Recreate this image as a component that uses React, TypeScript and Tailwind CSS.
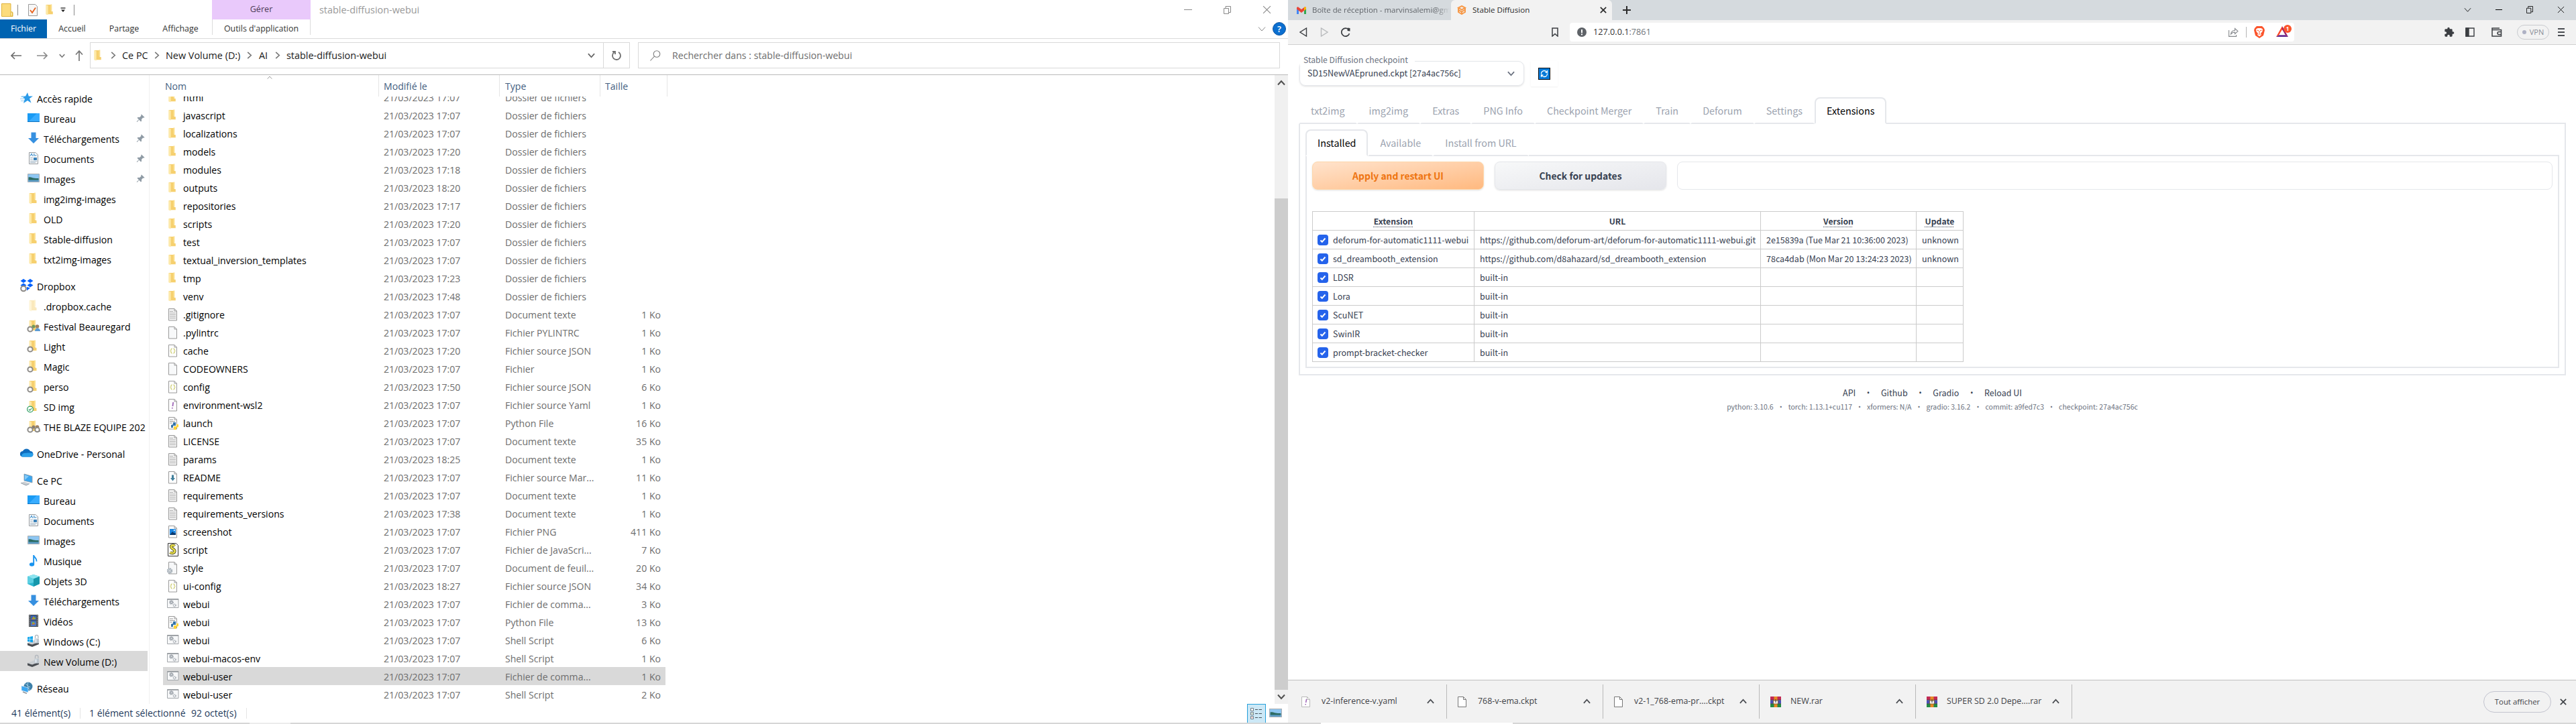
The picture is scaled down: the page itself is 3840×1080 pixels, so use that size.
import type { ReactNode } from 'react';
import clsx from 'clsx';
import { RefreshCw } from 'lucide-react';

type FileKind =
  | 'folder' | 'text' | 'blank' | 'json' | 'yaml' | 'python' | 'markdown' | 'image' | 'js' | 'css' | 'batch';

type FileRow = [name: string, kind: FileKind, time: string, type: string, size?: string];

const FILES: FileRow[] = [
  ['html', 'folder', '17:07', 'Dossier de fichiers'],
  ['javascript', 'folder', '17:07', 'Dossier de fichiers'],
  ['localizations', 'folder', '17:07', 'Dossier de fichiers'],
  ['models', 'folder', '17:20', 'Dossier de fichiers'],
  ['modules', 'folder', '17:18', 'Dossier de fichiers'],
  ['outputs', 'folder', '18:20', 'Dossier de fichiers'],
  ['repositories', 'folder', '17:17', 'Dossier de fichiers'],
  ['scripts', 'folder', '17:20', 'Dossier de fichiers'],
  ['test', 'folder', '17:07', 'Dossier de fichiers'],
  ['textual_inversion_templates', 'folder', '17:07', 'Dossier de fichiers'],
  ['tmp', 'folder', '17:23', 'Dossier de fichiers'],
  ['venv', 'folder', '17:48', 'Dossier de fichiers'],
  ['.gitignore', 'text', '17:07', 'Document texte', '1 Ko'],
  ['.pylintrc', 'blank', '17:07', 'Fichier PYLINTRC', '1 Ko'],
  ['cache', 'json', '17:20', 'Fichier source JSON', '1 Ko'],
  ['CODEOWNERS', 'blank', '17:07', 'Fichier', '1 Ko'],
  ['config', 'json', '17:50', 'Fichier source JSON', '6 Ko'],
  ['environment-wsl2', 'yaml', '17:07', 'Fichier source Yaml', '1 Ko'],
  ['launch', 'python', '17:07', 'Python File', '16 Ko'],
  ['LICENSE', 'text', '17:07', 'Document texte', '35 Ko'],
  ['params', 'text', '18:25', 'Document texte', '1 Ko'],
  ['README', 'markdown', '17:07', 'Fichier source Mar...', '11 Ko'],
  ['requirements', 'text', '17:07', 'Document texte', '1 Ko'],
  ['requirements_versions', 'text', '17:38', 'Document texte', '1 Ko'],
  ['screenshot', 'image', '17:07', 'Fichier PNG', '411 Ko'],
  ['script', 'js', '17:07', 'Fichier de JavaScri...', '7 Ko'],
  ['style', 'css', '17:07', 'Document de feuil...', '20 Ko'],
  ['ui-config', 'json', '18:27', 'Fichier source JSON', '34 Ko'],
  ['webui', 'batch', '17:07', 'Fichier de comma...', '3 Ko'],
  ['webui', 'python', '17:07', 'Python File', '13 Ko'],
  ['webui', 'batch', '17:07', 'Shell Script', '6 Ko'],
  ['webui-macos-env', 'batch', '17:07', 'Shell Script', '1 Ko'],
  ['webui-user', 'batch', '17:07', 'Fichier de comma...', '1 Ko'],
  ['webui-user', 'batch', '17:07', 'Shell Script', '2 Ko'],
];

const SELECTED_FILE = 32;

/* ---------- icons ---------- */

function Chevron({ dir, className }: { dir: 'up' | 'down' | 'right'; className?: string }) {
  const d = { up: 'M1 8.5 6 3l5 5.5', down: 'M1 3.5 6 9l5-5.5', right: 'M3.5 1 9 6l-5.5 5' }[dir];
  return (
    <svg viewBox="0 0 12 12" className={clsx('shrink-0', className)} fill="none" stroke="currentColor">
      <path d={d} />
    </svg>
  );
}

function Folder({ className, faded, badge }: { className?: string; faded?: boolean; badge?: 'cloud' | 'people' | 'check' | 'team' }) {
  return (
    <svg viewBox="0 0 20 20" className={clsx('shrink-0', className)}>
      <g opacity={faded ? 0.45 : 1}>
        <path d="M4 2h8v10l2.500 1v4H4z" fill="#f6d06f" />
        <path d="M11 1.500h2v10h-2z" fill="#fbe08f" />
        <path d="M3.500 2 7 3.500v15L3.500 17z" fill="#fde9a9" />
      </g>
      {(badge === 'people' || badge === 'team') && (
        <>
          <circle cx="10" cy="11" r="2.500" fill={badge === 'people' ? '#6f9a5a' : '#8a7d70'} />
          <circle cx="15.500" cy="11" r="2.800" fill="#a0805f" />
          <path d="M12 18c0-6 8-6 8 0z" fill={badge === 'people' ? '#5b9bd5' : '#8b8986'} />
        </>
      )}
      {badge && badge !== 'check' && (
        <circle cx="5" cy="15" r="3.600" fill="#fff" stroke="#8b8986" strokeWidth="2" />
      )}
      {badge === 'team' && <circle cx="15.500" cy="15" r="3.300" fill="#fff" stroke="#8b8986" strokeWidth="2" />}
      {badge === 'check' && (
        <>
          <circle cx="5" cy="14.500" r="4.400" fill="#fff" stroke="#2f9e63" strokeWidth="1.200" />
          <path d="m3 14.500 1.500 1.700 2.700-3" fill="none" stroke="#2f9e63" strokeWidth="1.200" />
        </>
      )}
    </svg>
  );
}

function Page({ children, tint = '#fdfdfd' }: { children?: ReactNode; tint?: string }) {
  return (
    <>
      <path d="M2.500 1.500h8.500l3.500 3.500v14h-12z" fill={tint} stroke="#9a9a9a" />
      <path d="M11 1.500V5h3.500" fill="none" stroke="#9a9a9a" />
      {children}
    </>
  );
}

function Python({ x = 6, y = 9 }) {
  return (
    <g transform={`translate(${x} ${y})`}>
      <path d="M3 0h4v5H3v3H0V4l3-1z" fill="#3775a9" />
      <path d="M8 3h3v4L8 8v3H4V6h4z" fill="#ffd43b" />
    </g>
  );
}

function Gears() {
  return (
    <g fill="none" stroke="#a3a9b0" strokeWidth="1.600">
      <circle cx="6.500" cy="7.500" r="2.600" strokeDasharray="1.400 0.800" />
      <circle cx="6.500" cy="7.500" r="1.600" />
      <circle cx="11.200" cy="12" r="1.800" strokeDasharray="1.200 0.600" />
    </g>
  );
}

function FileIcon({ kind }: { kind: FileKind }) {
  if (kind === 'folder') return <Folder className="size-[19px] -ml-0.5" />;
  return (
    <svg viewBox="0 0 18 20" className="h-5 w-[18px] shrink-0 -ml-px overflow-visible">
      {kind === 'text' && (
        <Page tint="#f1f1f1">
          <path d="M4 5.500h5M4 8h9M4 10.500h9M4 13h9M4 15.500h9" stroke="#b4b4b4" />
        </Page>
      )}
      {kind === 'blank' && <Page tint="#f8f9fa" />}
      {kind === 'json' && (
        <Page>
          <path d="M7.500 7q-1.500 0-1.500 1.500v1L5 10.500l1 1v1Q6 14 7.500 14M9.500 7Q11 7 11 8.500v1l1 1-1 1v1Q11 14 9.500 14" fill="none" stroke="#b9b92f" />
        </Page>
      )}
      {kind === 'yaml' && (
        <Page>
          <path d="m9.200 6-.8 6M7.900 14l-.2 1.500" stroke="#9a5fb5" strokeWidth="1.700" />
        </Page>
      )}
      {kind === 'python' && (
        <Page>
          <path d="M4 5h5M4 7.500h8M4 10h4" stroke="#9a9a9a" />
          <Python />
        </Page>
      )}
      {kind === 'markdown' && (
        <Page>
          <path d="M7 6.500h3V11h2l-3.500 4.500L5 11h2z" fill="#43809c" />
        </Page>
      )}
      {kind === 'image' && (
        <Page>
          <path d="M4 6h9v9H4z" fill="#1c86e0" />
          <path d="m4 15 4-5 3 2.500 2-1V15z" fill="#0b3a6f" />
          <circle cx="10.800" cy="8" r="1" fill="#fff" />
        </Page>
      )}
      {kind === 'js' && (
        <>
          <path d="M1.500.5h12l3 3v16h-15z" fill="#fff" stroke="#333" />
          <path d="M11.500 4.500c-2-2-6-1-5.500 1.500s5.500 3 5.500 6-4.500 4-7 2" fill="none" stroke="#4b4a20" strokeWidth="4.200" />
          <path d="M11.500 4.500c-2-2-6-1-5.500 1.500s5.500 3 5.500 6-4.500 4-7 2" fill="none" stroke="#e6dc4a" strokeWidth="2.500" />
        </>
      )}
      {kind === 'css' && (
        <>
          <Page tint="#f6f7f8" />
          <circle cx="4" cy="14.500" r="3.200" fill="#e4e8ec" stroke="#9ba5ae" strokeWidth="2" strokeDasharray="1.700 .8" />
          <circle cx="4" cy="14.500" r="1.400" fill="#fff" stroke="#9ba5ae" />
        </>
      )}
      {kind === 'batch' && (
        <>
          <path d="M.5 2.500h16.500v13H.5z" fill="#f7f8f9" stroke="#a2a6aa" />
          <path d="M.5 3h16.500" stroke="#8f9498" strokeWidth="1.500" />
          <Gears />
        </>
      )}
    </svg>
  );
}

function DesktopIcon() {
  return (
    <svg viewBox="0 0 20 20" className="size-5 shrink-0">
      <path d="M1 3h18v13H1z" fill="#1a9bf4" />
      <path d="M3 15 15 3h4v12z" fill="#38acff" />
      <path d="M1 15.500h18" stroke="#1273bd" />
    </svg>
  );
}

function DownloadIcon() {
  return (
    <svg viewBox="0 0 20 20" className="size-5 shrink-0">
      <path d="M6.500 1.500h7v8.500H18l-8 8-8-8h4.500z" fill="#3690e0" />
    </svg>
  );
}

function DocumentsIcon() {
  return (
    <svg viewBox="0 0 20 20" className="size-5 shrink-0">
      <path d="M3.500 1.500H13l3.500 3.500v13.500h-13z" fill="#fbfbfb" stroke="#969ba0" />
      <path d="m5 7 2-4 1.500 4M9.500 4H12M9.500 6h5" fill="none" stroke="#2f87c9" />
      <path d="M5 9.500h4M5 12h4M5 14.500h10M5 16.500h8" stroke="#9fb4c5" />
      <path d="M10 9h5v4h-5z" fill="#3a81b8" />
    </svg>
  );
}

function PicturesIcon({ className = 'size-5' }) {
  return (
    <svg viewBox="0 0 20 20" preserveAspectRatio="none" className={clsx('shrink-0', className)}>
      <path d="M1.500 3.500h17v12h-17z" fill="#8dc6f2" stroke="#a9adb1" />
      <path d="M2.500 8.500c4-1 6 2 15 1.500V13h-15z" fill="#2c6b62" />
      <path d="M2.500 12.500h15v2.500h-15z" fill="#5d9ec9" />
    </svg>
  );
}

function MusicIcon() {
  return (
    <svg viewBox="0 0 20 20" className="size-5 shrink-0">
      <ellipse cx="7.500" cy="16" rx="3.600" ry="2.800" fill="#1793ef" />
      <path d="M10.200 16V2c.5 4 4.800 4 4.300 9.500" fill="none" stroke="#1793ef" strokeWidth="1.900" />
    </svg>
  );
}

function CubeIcon() {
  return (
    <svg viewBox="0 0 20 20" className="size-5 shrink-0">
      <path d="m10 1 9 3v11l-9 4-9-4V4z" fill="#2bb5cf" />
      <path d="m10 1 9 3-9 3.500L1 4z" fill="#8de4ef" />
      <path d="m10 7.500 9-3.500v11l-9 4z" fill="#1597ab" />
      <path d="M1 4 10 7.500V13l-9 2z" fill="#5ccfe2" />
    </svg>
  );
}

function VideoIcon() {
  return (
    <svg viewBox="0 0 20 20" className="size-5 shrink-0">
      <path d="M3 1h14v18H3z" fill="#3c4046" />
      <path d="M6 2h8v7.500H6z" fill="#3465b5" />
      <path d="M6 10.500h8V18H6z" fill="#4a79c8" />
      <path d="m7 8 3-5 3 5zM7 16l3-4 3 3z" fill="#d9762b" />
      <path d="M9 5h4v2H9zM8 12h3v2H8z" fill="#7bb241" />
      <path d="M4.500 2v16M15.500 2v16" stroke="#dfe3e8" strokeWidth="1.200" strokeDasharray="1.500 1.500" />
    </svg>
  );
}

function DriveIcon({ windows }: { windows?: boolean }) {
  return (
    <svg viewBox="0 0 20 20" className="size-5 shrink-0">
      <path d="m1 13 6 2 11-4v4L8 19l-7-2.500z" fill="#4b4f54" />
      <path d="m1 13 10-4 8 2-11 4.500z" fill="#c9cdd1" />
      {windows && <path d="M1 4.500l3.500-.7v3.700H1zM5 3.700l4-.7v4.500H5zM1 8h3.500v3.600L1 11zM5 8h4v4.300l-4-.6z" fill="#12a5ec" />}
      <path d="M12.500 6V3.500a2.200 2.200 0 0 1 4.400 0V6" fill="none" stroke="#b0b6bc" strokeWidth="1.300" />
      <path d="M11.500 6.500h6.500v7h-6.500z" fill="#bcc6cf" />
      <path d="M12.500 7.500h2v5h-2z" fill="#e6edf3" />
    </svg>
  );
}

function StarIcon() {
  return (
    <svg viewBox="0 0 20 20" className="size-5 shrink-0">
      <path d="m11 2 1.800 5.500H19L14 11l2.500 6.500L11 14l-6 4 2-6.500-5-4h6z" fill="#2b9be9" />
      <path d="M1 8.500h5M0 11.500h6M1 14.500h5" stroke="#90cdf4" />
    </svg>
  );
}

function DropboxIcon() {
  return (
    <svg viewBox="0 0 20 20" className="size-5 shrink-0">
      <path d="m5 0 4.500 3L5 6 .5 3zM15 0l4.500 3L15 6l-4.500-3zM5 6.500l4.500 3-4.500 3-4.500-3zM15 6.500l4.500 3-4.500 3-4.500-3zM10 12l5 1.500-5 4z" fill="#0061fe" />
      <circle cx="5" cy="14.500" r="3.800" fill="#fff" stroke="#8b8986" strokeWidth="2" />
    </svg>
  );
}

function OneDriveIcon() {
  return (
    <svg viewBox="0 0 20 20" className="size-5 shrink-0">
      <path d="M4 15.500a4.200 4.200 0 0 1 0-8.500A6 6 0 0 1 15 7a4.300 4.300 0 0 1 1 8.500z" fill="#0f6cbd" />
      <path d="M3 15.500c-2-2 0-5 3-5.500s9-1 12 0c2.500 1.500 1.500 5.500-1.500 5.500z" fill="#2aa0ea" />
    </svg>
  );
}

function ComputerIcon({ network }: { network?: boolean }) {
  return (
    <svg viewBox="0 0 20 20" className="size-5 shrink-0">
      {network ? (
        <>
          <circle cx="12" cy="8" r="6.500" fill="#3d7fa8" />
          <path d="M8 4c3 1 3 5 7 5M12 2c-2 5 0 9 3 11" stroke="#a9d4e8" fill="none" />
          <path d="m2 7 10 3v7L2 14z" fill="#3aa6f0" stroke="#dceaf5" strokeWidth=".7" />
          <path d="m4 16 6 2.500" stroke="#8f969c" strokeWidth="1.500" />
        </>
      ) : (
        <>
          <path d="m6 1 12 3.500V14L6 11z" fill="#3aa6f0" stroke="#8c98a3" strokeWidth=".8" />
          <path d="m7 2.500 6 2L7 10z" fill="#86cbf8" />
          <path d="m1 14 5-1.500L14 15l-5 3z" fill="#c9ced3" />
          <path d="m1 14.500 8 3.500 5-2.500" stroke="#8c98a3" fill="none" />
        </>
      )}
    </svg>
  );
}

function PinIcon() {
  return (
    <svg viewBox="0 0 14 14" className="size-[13px] shrink-0" fill="#8f9ba5">
      <path d="M8.500.5 13.500 5.500 12.300 6.300 11 6 8.500 8.500l.2 2.800-1.200 1L4.700 9.500 1.500 13l-.8-.8L4.300 9 1.700 6.400l1-1.200L5.500 5.500 8 3l-.3-1.300z" />
    </svg>
  );
}

function WinrarIcon() {
  return (
    <svg viewBox="0 0 16 16" className="size-4 shrink-0">
      <path d="M0 0h16v5H0z" fill="#c22a55" />
      <path d="M0 5.500h16v5H0z" fill="#4a4fb8" />
      <path d="M0 11h16v5H0z" fill="#238a45" />
      <path d="M0 5.200h16M0 10.700h16" stroke="#222" strokeWidth=".7" />
      <path d="M5.500 0h5v16h-5z" fill="#e88b24" />
      <path d="M4.500 6h7v5h-7z" fill="#f3f0ea" stroke="#6b4a1f" strokeWidth=".7" />
      <path d="M8 4v5" stroke="#333" />
    </svg>
  );
}

function RestoreIcon({ className }: { className?: string }) {
  return (
    <svg viewBox="0 0 11 12" className={clsx('shrink-0', className)} fill="none" stroke="currentColor">
      <path d="M.5 3.500h7v8h-7zM3 3V.5h7.500v9H8" />
    </svg>
  );
}

function CloseIcon({ className, width = 1 }: { className?: string; width?: number }) {
  return (
    <svg viewBox="0 0 12 12" className={clsx('shrink-0', className)} fill="none" stroke="currentColor" strokeWidth={width}>
      <path d="m1 1 10 10M11 1 1 11" />
    </svg>
  );
}

/* ---------- explorer window ---------- */

function NavItem({ icon, label, root, pinned, selected }: { icon: ReactNode; label: string; root?: boolean; pinned?: boolean; selected?: boolean }) {
  return (
    <div
      className={clsx(
        'flex h-[30px] w-[220px] items-center gap-[5px] overflow-hidden whitespace-nowrap',
        root ? 'pl-[30px]' : 'pl-10',
        selected && 'bg-[#d9d9d9]',
      )}
    >
      {icon}
      <span className="min-w-0 flex-1 overflow-hidden pt-[3px]">{label}</span>
      {pinned && <span className="pr-1"><PinIcon /></span>}
    </div>
  );
}

function Sidebar() {
  return (
    <nav className="flex w-[223px] shrink-0 flex-col gap-2.5 border-r border-[#f0f0f0] pt-[19px] text-[14.1px] leading-5 text-black">
      <div>
        <NavItem root icon={<StarIcon />} label="Accès rapide" />
        <NavItem pinned icon={<DesktopIcon />} label="Bureau" />
        <NavItem pinned icon={<DownloadIcon />} label="Téléchargements" />
        <NavItem pinned icon={<DocumentsIcon />} label="Documents" />
        <NavItem pinned icon={<PicturesIcon />} label="Images" />
        {['img2img-images', 'OLD', 'Stable-diffusion', 'txt2img-images'].map((f) => (
          <NavItem key={f} icon={<Folder className="size-5" />} label={f} />
        ))}
      </div>
      <div>
        <NavItem root icon={<DropboxIcon />} label="Dropbox" />
        <NavItem icon={<Folder faded className="size-5" />} label=".dropbox.cache" />
        <NavItem icon={<Folder badge="people" className="size-5" />} label="Festival Beauregard" />
        <NavItem icon={<Folder badge="cloud" className="size-5" />} label="Light" />
        <NavItem icon={<Folder badge="cloud" className="size-5" />} label="Magic" />
        <NavItem icon={<Folder badge="cloud" className="size-5" />} label="perso" />
        <NavItem icon={<Folder badge="check" className="size-5" />} label="SD img" />
        <NavItem icon={<Folder badge="team" className="size-5" />} label="THE BLAZE EQUIPE 202" />
      </div>
      <NavItem root icon={<OneDriveIcon />} label="OneDrive - Personal" />
      <div>
        <NavItem root icon={<ComputerIcon />} label="Ce PC" />
        <NavItem icon={<DesktopIcon />} label="Bureau" />
        <NavItem icon={<DocumentsIcon />} label="Documents" />
        <NavItem icon={<PicturesIcon />} label="Images" />
        <NavItem icon={<MusicIcon />} label="Musique" />
        <NavItem icon={<CubeIcon />} label="Objets 3D" />
        <NavItem icon={<DownloadIcon />} label="Téléchargements" />
        <NavItem icon={<VideoIcon />} label="Vidéos" />
        <NavItem icon={<DriveIcon windows />} label="Windows (C:)" />
        <NavItem selected icon={<DriveIcon />} label="New Volume (D:)" />
      </div>
      <NavItem root icon={<ComputerIcon network />} label="Réseau" />
    </nav>
  );
}

function FileList() {
  return (
    <div className="flex min-w-0 flex-1 flex-col text-[14.1px] leading-5">
      <div className="flex h-8 shrink-0 pl-5 text-[#44607f]">
        <div className="relative w-[322px] border-r border-[#e5e5e5] pt-[7px] pl-[3px]">
          Nom
          <Chevron dir="up" className="absolute top-0 left-[154px] h-2 w-2.5 text-[#6d6d6d]" />
        </div>
        <div className="w-[180px] border-r border-[#e5e5e5] pt-[7px] pl-[7px]">Modifié le</div>
        <div className="w-[150px] border-r border-[#e5e5e5] pt-[7px] pl-2">Type</div>
        <div className="w-[100px] border-r border-[#e5e5e5] pt-[7px] pl-[7px]">Taille</div>
      </div>
      <div className="h-[906px] overflow-hidden pl-5">
        <div className="-mt-[13px]">
          {FILES.map(([name, kind, time, type, size], i) => (
            <div
              key={i}
              className={clsx('flex h-[27px] w-[749px] items-center whitespace-nowrap', i === SELECTED_FILE && 'bg-[#d9d9d9]')}
            >
              <div className="flex w-[30px] shrink-0 items-center pl-[7px]"><FileIcon kind={kind} /></div>
              <div className="w-[299px] shrink-0 pt-[3px] text-black">{name}</div>
              <div className="w-[181px] shrink-0 pt-[3px] text-[#6d6d6d]">21/03/2023 {time}</div>
              <div className="w-[150px] shrink-0 pt-[3px] text-[#6d6d6d]">{type}</div>
              <div className="w-[82px] shrink-0 pt-[3px] text-right text-[#6d6d6d]">{size}</div>
            </div>
          ))}
        </div>
      </div>
    </div>
  );
}

function Explorer() {
  return (
    <section className="flex h-[1078px] w-[1920px] shrink-0 flex-col bg-white font-['Open_Sans',sans-serif] whitespace-nowrap">
      {/* title bar */}
      <div className="flex h-[29px] shrink-0">
        <div className="flex w-[316px] items-center pl-0.5">
          <svg viewBox="0 0 18 20" className="h-5 w-[18px]">
            <path d="M.5.5H14v12l3 1v6H.5z" fill="#fcdc7c" stroke="#e0b43c" />
            <path d="M14 13h2.500v6H14z" fill="#fff0b5" stroke="#e0b43c" />
          </svg>
          <span className="ml-1.5 h-4 w-px bg-[#8a8a8a]" />
          <svg viewBox="0 0 14 18" className="ml-[15px] h-[18px] w-3.5">
            <path d="M.5.5h10l3 3v14H.5z" fill="#f7f7f7" stroke="#9b9b9b" />
            <path d="m3 9 3 4 5-7.500" fill="none" stroke="#e8611c" strokeWidth="1.800" />
          </svg>
          <Folder className="ml-[9px] size-[19px]" />
          <svg viewBox="0 0 8 8" className="ml-1.5 size-2">
            <path d="M.5 1h7" stroke="#222" strokeWidth="1.300" />
            <path d="M1 3.500h6L4 7z" fill="#222" />
          </svg>
          <span className="ml-3 h-4 w-px bg-[#8a8a8a]" />
        </div>
        <div className="flex w-[147px] items-center justify-center bg-[#e9c9fb] text-[12.6px] text-[#4b3a55]">Gérer</div>
        <div className="flex flex-1 items-center pl-[13px] text-[14.4px] text-[#999]">stable-diffusion-webui</div>
        <div className="flex items-center gap-[47px] pr-[25px] text-[#888]">
          <span className="h-px w-3 bg-[#888]" />
          <RestoreIcon className="h-3 w-[11px]" />
          <CloseIcon className="size-[13px]" />
        </div>
      </div>

      {/* ribbon tabs */}
      <div className="flex h-[29px] shrink-0 border-b border-[#dadada] text-[12.4px] leading-[28px] text-[#333]">
        <div className="w-[70px] bg-[#0063b1] text-center text-white">Fichier</div>
        <div className="w-[75px] text-center">Accueil</div>
        <div className="w-20 text-center">Partage</div>
        <div className="w-[91px] pr-[3px] text-center">Affichage</div>
        <div className="h-[23px] w-[147px] border-x border-[#dcdcdc] text-center">Outils d'application</div>
        <div className="flex flex-1 items-center justify-end gap-[10px] pr-[3px]">
          <Chevron dir="down" className="size-3 text-[#888]" />
          <div className="flex size-5 items-center justify-center rounded-full border border-[#1055a0] bg-[#0b6fd0] text-[13px] font-semibold text-white">?</div>
        </div>
      </div>

      {/* address bar */}
      <div className="flex h-[54px] shrink-0 items-start border-b border-[#b9b9b9] pt-[5px] text-[14.4px] text-[#1a1a1a]">
        <div className="flex h-[39px] w-[134px] items-center pl-4 text-[#777]">
          <svg viewBox="0 0 16 12" className="h-3 w-4" fill="none" stroke="#6d6d6d" strokeWidth="1.700"><path d="M6 1 1 6l5 5M1 6h15" /></svg>
          <svg viewBox="0 0 16 12" className="ml-[23px] h-3 w-4" fill="none" stroke="#8a8a8a" strokeWidth="1.700"><path d="m10 1 5 5-5 5M15 6H0" /></svg>
          <Chevron dir="down" className="ml-[17px] h-2.5 w-[9px] [stroke-width:2]" />
          <svg viewBox="0 0 12 16" className="ml-[15px] h-4 w-3" fill="none" stroke="#777" strokeWidth="1.700"><path d="M1 6.500 6 1l5 5.500M6 1v15" /></svg>
        </div>
        <div className="flex h-[39px] w-[805px] items-center border border-[#d9d9d9]">
          <Folder className="ml-0.5 size-[19px]" />
          <Chevron dir="right" className="ml-[7px] size-[11px] text-[#777] [stroke-width:1.800]" />
          <span className="ml-[8px] w-[46px]">Ce PC</span>
          <Chevron dir="right" className="size-[11px] text-[#777] [stroke-width:1.800]" />
          <span className="ml-[8px] w-[119px]">New Volume (D:)</span>
          <Chevron dir="right" className="size-[11px] text-[#777] [stroke-width:1.800]" />
          <span className="ml-[9px] w-[22px]">AI</span>
          <Chevron dir="right" className="size-[11px] text-[#777] [stroke-width:1.800]" />
          <span className="ml-[8px] flex-1">stable-diffusion-webui</span>
          <Chevron dir="down" className="mr-[12px] size-[11px] text-[#666] [stroke-width:2]" />
          <div className="flex h-full w-[39px] items-center justify-center border-l border-[#d9d9d9]">
            <svg viewBox="0 0 16 16" className="size-4" fill="none" stroke="#6d6d6d" strokeWidth="1.800">
              <path d="M11 2.800a6 6 0 1 1-6.500.3M2 2h4v4" />
            </svg>
          </div>
        </div>
        <div className="ml-3 flex h-[39px] w-[957px] items-center border border-[#d9d9d9] text-[14.15px] text-[#6d6d6d]">
          <svg viewBox="0 0 16 16" className="ml-[17px] size-4" fill="none" stroke="#7d7d7d" strokeWidth="1.100">
            <circle cx="10" cy="5.500" r="4.800" /><path d="M6.500 9 .5 15.500" />
          </svg>
          <span className="ml-[17px]">Rechercher dans : stable-diffusion-webui</span>
        </div>
      </div>

      <div className="flex h-[938px] shrink-0">
        <Sidebar />
        <FileList />
        <div className="flex w-5 shrink-0 flex-col items-center bg-[#f0f0f0]">
          <Chevron dir="up" className="mt-1.5 size-3 text-[#505050] [stroke-width:2]" />
          <div className="mt-[166px] h-[733px] w-full bg-[#cdcdcd]" />
          <Chevron dir="down" className="mt-[4px] size-3 text-[#505050] [stroke-width:2]" />
        </div>
      </div>

      {/* status bar */}
      <div className="flex h-7 items-center text-[14px] text-[#1e395b]">
        <span className="w-[102px] pb-px pl-[17px]">41 élément(s)</span>
        <span className="ml-[17px] h-4 w-px bg-[#e5e5e5]" />
        <span className="ml-[13px] w-[152px] pb-px">1 élément sélectionné</span>
        <span className="w-[82px] pb-px">92 octet(s)</span>
        <span className="h-4 w-px bg-[#e5e5e5]" />
        <div className="ml-auto flex items-center gap-[4px] pr-[8px]">
          <div className="flex h-7 w-7 items-center justify-center border border-b-0 border-[#26a0da] bg-[#cce8f6]">
            <svg viewBox="0 0 18 17" className="h-[17px] w-[18px]">
              <path d="M.5.5h4v4h-4zM.5 6.500h4v4h-4zM.5 12.500h4v4h-4z" fill="#fff" stroke="#6c7a84" />
              <path d="M7 2.500h4M12.500 2.500h4.500M7 8.500h4M12.500 8.500h4.500M7 14.500h4M12.500 14.500h4.500" stroke="#47545d" />
              <path d="M2 8h1v1H2z" fill="#2d8a2d" /><path d="M2 14h1v1H2z" fill="#c33" />
            </svg>
          </div>
          <PicturesIcon className="h-[20px] w-[21px]" />
        </div>
      </div>
    </section>
  );
}

/* ---------- browser window ---------- */

type ExtensionRow = { name: string; url: string; version?: string; update?: string };

const EXTENSIONS: ExtensionRow[] = [
  {
    name: 'deforum-for-automatic1111-webui',
    url: 'https://github.com/deforum-art/deforum-for-automatic1111-webui.git',
    version: '2e15839a (Tue Mar 21 10:36:00 2023)',
    update: 'unknown',
  },
  {
    name: 'sd_dreambooth_extension',
    url: 'https://github.com/d8ahazard/sd_dreambooth_extension',
    version: '78ca4dab (Mon Mar 20 13:24:23 2023)',
    update: 'unknown',
  },
  { name: 'LDSR', url: 'built-in' },
  { name: 'Lora', url: 'built-in' },
  { name: 'ScuNET', url: 'built-in' },
  { name: 'SwinIR', url: 'built-in' },
  { name: 'prompt-bracket-checker', url: 'built-in' },
];

const TABS = ['txt2img', 'img2img', 'Extras', 'PNG Info', 'Checkpoint Merger', 'Train', 'Deforum', 'Settings', 'Extensions'];
const SUB_TABS = ['Installed', 'Available', 'Install from URL'];

const VERSIONS = ['python: 3.10.6', 'torch: 1.13.1+cu117', 'xformers: N/A', 'gradio: 3.16.2', 'commit: a9fed7c3', 'checkpoint: 27a4ac756c'];

function TabStrip({ tabs, active }: { tabs: string[]; active: string }) {
  return (
    <div className="flex h-10 text-[14.35px] leading-[36px] text-[#9ca3af]">
      {tabs.map((tab) => (
        <div
          key={tab}
          className={clsx(
            'border-2 px-4',
            tab === active
              ? 'rounded-t-lg border-[#e5e7eb] border-b-white bg-white text-black'
              : 'border-transparent border-b-[#e5e7eb]',
          )}
        >
          {tab}
        </div>
      ))}
      <div className="flex-1 border-b-2 border-[#e5e7eb]" />
    </div>
  );
}

function BrowserChrome() {
  return (
    <>
      <div className="flex h-[30px] shrink-0 bg-[#d5dade] text-[11.6px] text-[#5f6368]">
        <div className="flex w-[243px] items-center pl-[13px]">
          <svg viewBox="0 0 14 11" className="h-[11px] w-3.5 shrink-0">
            <path d="M0 1.500V11h3V4.500z" fill="#4285f4" />
            <path d="M14 1.500V11h-3V4.500z" fill="#34a853" />
            <path d="M0 1.500v2L7 9l7-5.500v-2C13 0 12 0 11 1L7 4 3 1C2 0 1 0 0 1.500z" fill="#ea4335" />
            <path d="M11 1v5l3-2.500v-2C13.500 0 12 0 11 1z" fill="#fbbc04" />
          </svg>
          <span className="ml-[9px] w-[205px] overflow-hidden text-[11.45px] whitespace-nowrap [mask-image:linear-gradient(to_right,black_90%,transparent)]">
            Boîte de réception - marvinsalemi@gm
          </span>
        </div>
        <div className="flex w-60 items-center rounded-t-md bg-[#f2f2f2] pl-[9px] text-[#2b2b2b]">
          <svg viewBox="0 0 14 14" className="size-3.5" fill="none" stroke="#f79a4a" strokeWidth="2">
            <path d="m7 1 5 2.500L7 6.500 2 3.500zM2 4v6l5 3V9.500L2 7M12 4v6l-5 3M7 9.500l5-3" />
          </svg>
          <span className="ml-[9px] flex-1">Stable Diffusion</span>
          <CloseIcon width={2} className="mr-2 size-2.5" />
        </div>
        <div className="flex flex-1 items-center pl-4">
          <svg viewBox="0 0 12 12" className="size-3" stroke="#2b2b2b" strokeWidth="2"><path d="M6 0v12M0 6h12" /></svg>
        </div>
        <div className="flex items-center gap-[36px] pr-[17px] pb-0.5 text-[#111]">
          <Chevron dir="down" className="size-[11px]" />
          <span className="h-px w-2.5 bg-black" />
          <RestoreIcon className="h-[11px] w-2.5" />
          <CloseIcon className="size-[11px]" />
        </div>
      </div>

      <div className="flex h-[37px] shrink-0 items-center border-b border-[#d0d0d0] bg-[#f2f2f2] text-[#3b3e42]">
        <svg viewBox="0 0 12 14" className="ml-[17px] h-3.5 w-3" fill="none" stroke="currentColor" strokeWidth="1.400"><path d="M10.500 1v12L1 7z" /></svg>
        <svg viewBox="0 0 12 14" className="ml-[19px] h-3.5 w-3" fill="none" stroke="#b9bbbd" strokeWidth="1.400"><path d="M1.500 1v12L11 7z" /></svg>
        <svg viewBox="0 0 14 14" className="ml-[19px] size-3.5" fill="none" stroke="currentColor" strokeWidth="1.700">
          <path d="M12.500 9A6 6 0 1 1 11 2.800" /><path d="M10 .5 13.500 1v4.500L9.500 5z" fill="currentColor" stroke="none" />
        </svg>
        <svg viewBox="0 0 10 14" className="ml-[300px] h-3.5 w-2.5" fill="none" stroke="currentColor" strokeWidth="1.500"><path d="M1 1h8v12L5 9.500 1 13z" /></svg>
        <div className="ml-[17px] flex h-7 w-[1080px] items-center rounded bg-white text-[12.7px] text-[#333]">
          <svg viewBox="0 0 14 14" className="ml-[11px] size-3.5">
            <circle cx="7" cy="7" r="7" fill="#5f6368" /><path d="M6 3h2v5H6zM6 9.300h2v2H6z" fill="#fff" />
          </svg>
          <span className="ml-2.5 flex-1">127.0.0.1<span className="text-[#70757a]">:7861</span></span>
          <svg viewBox="0 0 15 14" className="h-3.5 w-[15px]" fill="none" stroke="#85888c" strokeWidth="1.100">
            <path d="M.6 4v9.400h11V11M3.500 10c.5-4 3-5.500 6-5.500V1.500L14 5.500l-4.500 4V7C7 7 5 8 3.500 10z" />
          </svg>
          <span className="ml-[11px] h-4 w-px bg-[#b5b5b5]" />
          <svg viewBox="0 0 16 18" className="ml-[11px] h-[18px] w-4">
            <path d="m4 0-3 3-1 3 2 8 6 4 6-4 2-8-1-3-3-3z" fill="#fb542b" />
            <path d="M3 4.500 5.500 3h5L13 4.500 12.500 8 10 11l1 2-3 2.300L5 13l1-2-2.500-3z" fill="#fff" />
            <path d="m4.500 6 2.500.8M11.500 6 9 6.800M8 7v3.500M6.500 12.500 8 11.500l1.500 1" stroke="#fb542b" fill="none" />
          </svg>
          <div className="relative mr-[9px] ml-[17px] h-[18px] w-[18px]">
            <svg viewBox="0 0 18 16" className="absolute bottom-0.5 h-4 w-[18px]">
              <path d="M9 0 0 16l4-2.500L9 5z" fill="#ff4724" />
              <path d="m9 0 9 16-4-2.500L9 5z" fill="#9e1f63" />
              <path d="M0 16h18l-4-2.800H4z" fill="#662d91" />
            </svg>
            <span className="absolute -top-0.5 -right-[5px] flex h-3 w-3 items-center justify-center rounded-full bg-[#fb542b] text-[8px] leading-none font-bold text-white">1</span>
          </div>
        </div>
        <svg viewBox="0 0 24 24" className="ml-[223px] size-4" fill="currentColor">
          <path d="M20.500 11H19V7a2 2 0 0 0-2-2h-4V3.500a2.500 2.500 0 0 0-5 0V5H4a2 2 0 0 0-2 2v3.800h1.500a2.700 2.700 0 0 1 0 5.400H2V20a2 2 0 0 0 2 2h3.800v-1.500a2.700 2.700 0 0 1 5.400 0V22H17a2 2 0 0 0 2-2v-4h1.500a2.500 2.500 0 0 0 0-5z" />
        </svg>
        <svg viewBox="0 0 14 14" className="ml-4 size-3.5" fill="none" stroke="currentColor" strokeWidth="1.400"><path d="M1 1h12v12H1z" /><path d="M1 1h4v12H1z" fill="currentColor" /></svg>
        <svg viewBox="0 0 16 14" className="ml-[25px] h-3.5 w-4" fill="none" stroke="currentColor" strokeWidth="1.500">
          <path d="M12 1H1v12h13.500V3.500H1M14.500 6.500H11a2 2 0 0 0 0 4h3.500" />
        </svg>
        <div className="ml-[22px] flex h-[22px] w-12 items-center justify-center gap-[5px] rounded-full border border-[#c9cbcf] text-[11px] text-[#8a8f98]">
          <span className="size-1.5 rounded-full bg-[#aeb1c4]" />VPN
        </div>
        <svg viewBox="0 0 10 12" className="ml-[13px] h-3 w-2.5" stroke="#4a4d52" strokeWidth="2"><path d="M0 1h10M0 6h10M0 11h10" /></svg>
      </div>
    </>
  );
}

function CheckedBox() {
  return (
    <span className="flex size-4 shrink-0 items-center justify-center rounded bg-[#2563eb]">
      <svg viewBox="0 0 16 16" className="size-4" fill="none" stroke="#fff" strokeWidth="2"><path d="m4.500 8.500 2.300 2.300L11.500 5.500" /></svg>
    </span>
  );
}

function ExtensionTable() {
  const cell = 'border border-[#cbcbcb] pl-2 pr-0';
  const hint = 'underline decoration-dotted underline-offset-[3px]';
  return (
    <table className="mt-8 w-[971px] table-fixed border-collapse text-[12.5px] leading-[20px] whitespace-nowrap text-[#374151]">
      <colgroup>
        <col className="w-[241px]" /><col className="w-[427px]" /><col className="w-[232px]" /><col className="w-[70px]" />
      </colgroup>
      <thead>
        <tr className="h-7 text-[12.2px] [&_th]:p-0 [&_th]:font-semibold">
          <th className={cell}><span className={hint}>Extension</span></th>
          <th className={cell}>URL</th>
          <th className={cell}><span className={hint}>Version</span></th>
          <th className={cell}><span className={hint}>Update</span></th>
        </tr>
      </thead>
      <tbody>
        {EXTENSIONS.map((ext) => (
          <tr key={ext.name} className="h-7">
            <td className={cell}>
              <div className="flex items-center gap-[7px] -ml-px"><CheckedBox />{ext.name}</div>
            </td>
            <td className={cell}>{ext.url}</td>
            <td className={cell}>{ext.version}</td>
            <td className={cell}>{ext.update}</td>
          </tr>
        ))}
      </tbody>
    </table>
  );
}

function WebuiPage() {
  return (
    <div className="flex-1 pl-4 font-['Noto_Sans_CJK_SC','Open_Sans',sans-serif]">
      {/* checkpoint picker */}
      <div className="flex items-start gap-2.5 pt-6">
        <fieldset className="relative ml-px h-[37px] w-[335px] rounded-[9px] border border-[#e5e7eb] shadow-sm">
          <span className="absolute -top-[13px] left-0 bg-white pr-2.5 pl-[5px] text-[12.2px] leading-5 text-[#6b7280]">Stable Diffusion checkpoint</span>
          <div className="flex h-full items-center justify-between pr-[13px] pl-[11px] text-[12.5px] text-[#374151]">
            SD15NewVAEpruned.ckpt [27a4ac756c]
            <Chevron dir="down" className="size-[11px] text-[#6b7280] [stroke-width:2]" />
          </div>
        </fieldset>
        <div className="flex h-[38px] w-10 items-center justify-center shadow-[0_1px_2px_rgba(0,0,0,0.06)]">
          <div className="flex size-[18px] items-center justify-center border border-[#111] bg-[#0078d7] text-white">
            <RefreshCw className="size-3" strokeWidth={2.600} />
          </div>
        </div>
      </div>

      <div className="mt-4 w-[1889px]">
        <TabStrip tabs={TABS} active="Extensions" />
        <div className="border-2 border-t-0 border-[#e5e7eb] px-2 pt-2 pb-[9px]">
          <TabStrip tabs={SUB_TABS} active="Installed" />
          <div className="border-2 border-t-0 border-[#e5e7eb] p-2 pb-[7px]">
            <div className="flex gap-4 text-[13.9px] font-semibold">
              <button className="h-[42px] w-64 rounded-lg border border-[#fed7aa] bg-gradient-to-br from-[#ffe3cc] to-[#ffb97f] text-[#ee7411] shadow-sm">
                Apply and restart UI
              </button>
              <button className="h-[42px] w-64 rounded-lg border border-[#e5e7eb] bg-gradient-to-br from-[#f7f8f9] to-[#e5e6eb] text-[#374151] shadow-sm">
                Check for updates
              </button>
              <div className="h-[42px] flex-1 rounded-lg border border-[#e5e7eb]" />
            </div>
            <ExtensionTable />
          </div>
        </div>
      </div>

      <footer className="flex w-[1889px] flex-col items-center pt-4 text-[#374151]">
        <div className="flex items-center text-[12.5px] leading-5">
          API<span className="mx-[12.6px]">•</span>Github<span className="mx-[12.6px]">•</span>Gradio<span className="mx-[12.6px]">•</span>Reload UI
        </div>
        <div className="mt-px flex items-center text-[10.5px] leading-5 text-[#6b7280]">
          {VERSIONS.map((item, i) => (
            <span key={item}>{i > 0 && <span className="mx-[5.8px]">•</span>}{item}</span>
          ))}
        </div>
      </footer>
    </div>
  );
}

const DOWNLOADS = [
  { name: 'v2-inference-v.yaml', icon: 'yaml' },
  { name: '768-v-ema.ckpt', icon: 'page' },
  { name: 'v2-1_768-ema-pr....ckpt', icon: 'page' },
  { name: 'NEW.rar', icon: 'rar' },
  { name: 'SUPER SD 2.0 Depe....rar', icon: 'rar' },
];

function DownloadShelf() {
  return (
    <div className="flex h-16 shrink-0 items-center border-t border-[#bfbfbf] bg-[#f2f2f2] pl-[4px] text-[12.4px] whitespace-nowrap text-[#3f4247]">
      {DOWNLOADS.map(({ name, icon }) => (
        <div key={name} className="flex h-[51px] w-[233px] items-center border-r border-[#b9b9b9]">
          <span className="flex w-[46px] items-center pl-[16px]">
            {icon === 'rar' ? (
              <WinrarIcon />
            ) : (
              <svg viewBox="0 0 13 16" className="h-4 w-[13px]">
                <path d="M.5.5h8l4 4v11H.5z" fill="#fff" stroke={icon === 'yaml' ? '#b9b9b9' : '#777'} />
                <path d="M8.500.5v4h4" fill="none" stroke={icon === 'yaml' ? '#b9b9b9' : '#777'} />
                {icon === 'yaml' && <path d="m7.500 4-.8 5M6.300 11l-.2 1.500" stroke="#9a5fb5" strokeWidth="1.500" />}
              </svg>
            )}
          </span>
          <span className="flex-1">{name}</span>
          <Chevron dir="up" className="mr-[18px] size-[11px] text-[#4a4d52] [stroke-width:2]" />
        </div>
      ))}
      <div className="ml-auto flex items-center pr-3.5">
        <div className="flex h-8 w-[101px] items-center justify-center rounded-full border border-[#c3c4cf] text-[11.4px]">Tout afficher</div>
        <CloseIcon width={2} className="ml-[13px] size-2.5" />
      </div>
    </div>
  );
}

export default function App() {
  return (
    <main className="flex h-[1080px] w-[3840px] flex-col overflow-hidden bg-white">
      <div className="flex">
        <Explorer />
        <section className="flex h-[1078px] w-[1920px] flex-col bg-white font-['Open_Sans',sans-serif]">
          <BrowserChrome />
          <WebuiPage />
          <DownloadShelf />
        </section>
      </div>
      {/* top edge of the taskbar */}
      <div className="flex h-0.5 bg-[#d6d6d6]">
        <span className="ml-[372px] w-[61px] bg-[#ececec]" />
        <span className="ml-[1536px] w-[286px] bg-white" />
      </div>
    </main>
  );
}
